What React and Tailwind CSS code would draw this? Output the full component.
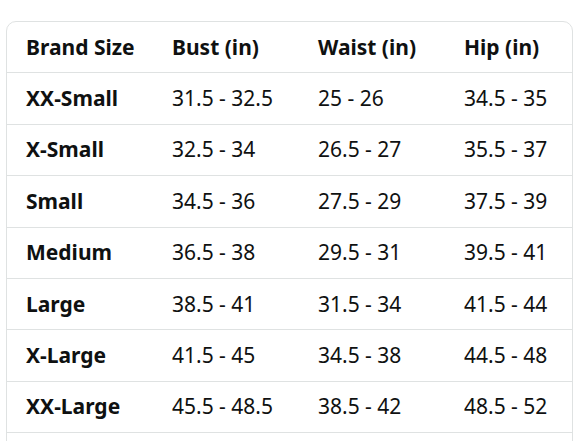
import React from 'react';

const rows = [
  ['XX-Small', '31.5 - 32.5', '25 - 26', '34.5 - 35'],
  ['X-Small', '32.5 - 34', '26.5 - 27', '35.5 - 37'],
  ['Small', '34.5 - 36', '27.5 - 29', '37.5 - 39'],
  ['Medium', '36.5 - 38', '29.5 - 31', '39.5 - 41'],
  ['Large', '38.5 - 41', '31.5 - 34', '41.5 - 44'],
  ['X-Large', '41.5 - 45', '34.5 - 38', '44.5 - 48'],
  ['XX-Large', '45.5 - 48.5', '38.5 - 42', '48.5 - 52'],
];

function Row({ cells, header }) {
  return (
    <div className="grid grid-cols-[146px_146px_146px_1fr] h-[51.4px] items-center border-b border-[#dfe2e2]">
      {cells.map((c, i) => (
        <div
          key={i}
          className={`pl-[19px] text-[21px] leading-none text-[#0f1111] ${header || i === 0 ? 'font-bold' : 'font-normal'}`}
        >
          {c}
        </div>
      ))}
    </div>
  );
}

export default function App() {
  return (
    <div className="w-[588px] h-[441px] overflow-hidden bg-white" style={{ fontFamily: '"Noto Sans", "Open Sans", sans-serif' }}>
      <div className="ml-[6px] mt-[21px] w-[567px] border border-[#dfe2e2] rounded-[10px] overflow-hidden">
        <Row cells={['Brand Size', 'Bust (in)', 'Waist (in)', 'Hip (in)']} header />
        {rows.map((r) => (
          <Row key={r[0]} cells={r} />
        ))}
        {/* next row continues below the fold */}
        <div className="h-[51.4px]" />
      </div>
    </div>
  );
}
